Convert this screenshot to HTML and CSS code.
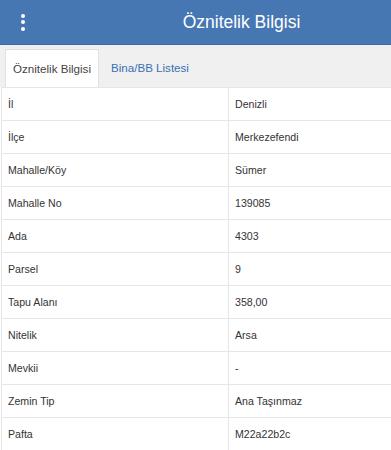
FILE: index.html
```html
<!DOCTYPE html>
<html><head><meta charset="utf-8">
<title>Öznitelik Bilgisi</title>
<link rel="stylesheet" href="styles.css">
</head><body>

<div class="topbar">
	<span class="menu"><i></i><i></i><i></i></span>
	<h1>Öznitelik Bilgisi</h1>
</div>

<div class="tabs">
	<span class="tab active">Öznitelik Bilgisi</span>
	<span class="tab">Bina/BB Listesi</span>
</div>

<div class="wrap">
<table class="attr">
<colgroup><col class="key"><col></colgroup>
<tr><td>İl</td><td>Denizli</td></tr>
<tr><td>İlçe</td><td>Merkezefendi</td></tr>
<tr><td>Mahalle/Köy</td><td>Sümer</td></tr>
<tr><td>Mahalle No</td><td>139085</td></tr>
<tr><td>Ada</td><td>4303</td></tr>
<tr><td>Parsel</td><td>9</td></tr>
<tr><td>Tapu Alanı</td><td>358,00</td></tr>
<tr><td>Nitelik</td><td>Arsa</td></tr>
<tr><td>Mevkii</td><td>-</td></tr>
<tr><td>Zemin Tip</td><td>Ana Taşınmaz</td></tr>
<tr><td>Pafta</td><td>M22a22b2c</td></tr>
</table>
</div>

</body></html>
```

FILE: styles.css
```css
body {
	margin: 0;
	font-family: "Liberation Sans", Arial, sans-serif;
	color: #333;
	overflow: hidden;
	background: #fff;
}
.topbar {
	height: 44px;
	background: #4677b2;
	display: flex;
	align-items: center;
	border-bottom: 1px solid #3d6aa2;
}
.menu {
	width: 46px;
	display: flex;
	flex-direction: column;
	align-items: center;
	gap: 2.5px;
}
.menu i {
	width: 4px;
	height: 4px;
	border-radius: 50%;
	background: #fff;
}
.topbar h1 {
	margin: 0;
	flex: 1;
	padding-left: 46px;
	text-align: center;
	font-size: 17.5px;
	font-weight: normal;
	color: #fff;
}
.tabs {
	height: 42px;
	background: #f0f0f0;
	display: flex;
	align-items: flex-end;
	padding-left: 5px;
	box-sizing: border-box;
}
.tab {
	height: 38px;
	line-height: 38px;
	padding: 0 8px 0 12px;
	font-size: 11.6px;
	color: #3a6fb0;
	white-space: nowrap;
	box-sizing: border-box;
}
.tab.active {
	padding: 0 7px;
	background: #fff;
	color: #444;
	border: 1px solid #e0e0e0;
	border-bottom: none;
}
.wrap {
	overflow: hidden;
	width: 391px;
}
.attr {
	margin-left: 1px;
	width: 470px;
	table-layout: fixed;
	border-collapse: collapse;
	font-size: 10.6px;
}
.attr col.key {
	width: 227px;
}
.attr td {
	border: 1.5px solid #e6e6e6;
	height: 33px;
	padding: 0 6px;
	box-sizing: border-box;
}
```
